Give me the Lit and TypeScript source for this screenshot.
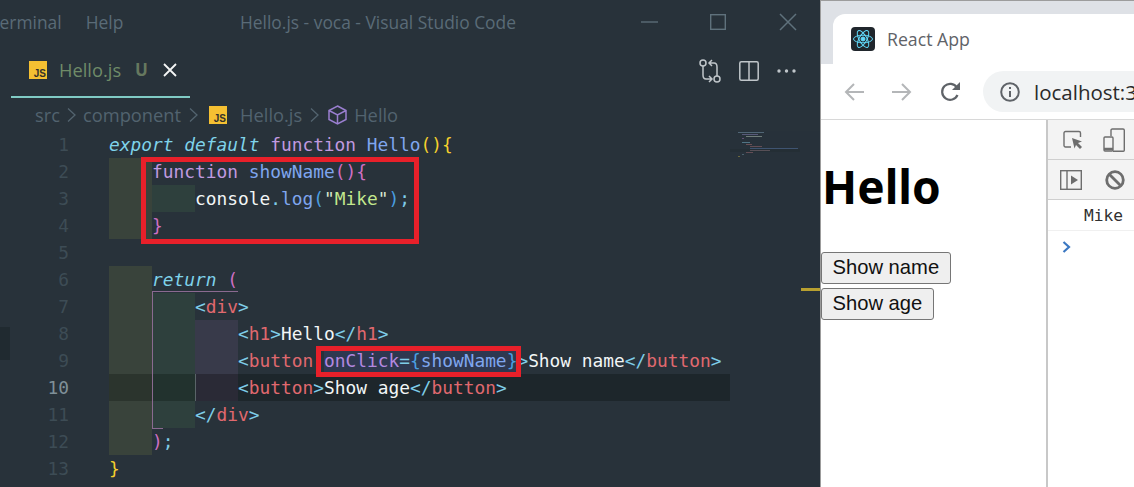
import { LitElement, html, css, svg } from "lit";
import { customElement } from "lit/decorators.js";

type Seg = [string, string?];
interface Line { n: number; ind: string[]; segs: Seg[]; cur?: boolean }

const lines: Line[] = [
  { n: 1, ind: [], segs: [["export default ", "kw"], ["function ", "fn"], ["Hello", "nm"], ["(){", "by"]] },
  { n: 2, ind: ["a"], segs: [["function ", "fn"], ["showName", "nm"], ["(){", "bp"]] },
  { n: 3, ind: ["a", "b"], segs: [["console", "tx"], [".", "pu"], ["log", "nm"], ["(", "bb"], ['"', "st2"], ["Mike", "st"], ['"', "st2"], [")", "bb"], [";", "pu"]] },
  { n: 4, ind: ["a"], segs: [["}", "bp"]] },
  { n: 5, ind: [], segs: [] },
  { n: 6, ind: ["a"], segs: [["return ", "kw"], ["(", "bp"]] },
  { n: 7, ind: ["a", "b"], segs: [["<", "pu"], ["div", "tg"], [">", "pu"]] },
  { n: 8, ind: ["a", "b", "c"], segs: [["<", "pu"], ["h1", "tg"], [">", "pu"], ["Hello", "tx"], ["</", "pu"], ["h1", "tg"], [">", "pu"]] },
  { n: 9, ind: ["a", "b", "c"], segs: [["<", "pu"], ["button", "tg"], [" "], ["onClick", "at"], ["=", "pu"], ["{", "bb"], ["showName", "nm"], ["}", "bb"], [">", "pu"], ["Show name", "tx"], ["</", "pu"], ["button", "tg"], [">", "pu"]] },
  { n: 10, cur: true, ind: ["a", "b", "c"], segs: [["<", "pu"], ["button", "tg"], [">", "pu"], ["Show age", "tx"], ["</", "pu"], ["button", "tg"], [">", "pu"]] },
  { n: 11, ind: ["a", "b"], segs: [["</", "pu"], ["div", "tg"], [">", "pu"]] },
  { n: 12, ind: ["a"], segs: [[")", "bp"], [";", "pu"]] },
  { n: 13, ind: [], segs: [["}", "by"]] },
];

const jsIcon = html`<span class="js"><span>JS</span></span>`;
const chevronPath = svg`<path d="M1 1.500 8 8l-7 6.500" fill="none" stroke="#53646f" stroke-width="1.300"/>`;

const miniRows: [number, number, number, string][] = [
  [738, 132, 26, "#7a9ab0"], [742, 134, 16, "#8a83b8"], [746, 136, 16, "#b8c8b8"], [742, 138, 2, "#a070b0"],
  [742, 142, 8, "#7ab8d0"], [746, 144, 6, "#b07070"], [750, 146, 12, "#a06a70"], [750, 148, 48, "#5878a8"], [750, 150, 20, "#8a7078"], [746, 152, 7, "#a06a70"], [742, 154, 2, "#7090a0"], [738, 156, 2, "#b0a040"],
];

@customElement("app-root")
export class AppRoot extends LitElement {
  static styles = css`
    :host { display: flex; width: 1134px; height: 487px; overflow: hidden; background: #28323a; }
    * { box-sizing: border-box; }
    svg { display: block; flex: none; }

    .vscode { position: relative; width: 820px; height: 487px; background: #28323a; font-family: "Open Sans", "Noto Sans", sans-serif; overflow: hidden; flex: none; }
    .titlebar { display: flex; align-items: center; height: 43px; font-size: 17.400px; color: #5a6b77; white-space: nowrap; }
    .menu { display: flex; gap: 24px; margin-left: -10px; width: 250px; }
    .title { width: 401px; }
    .winbtns { display: flex; align-items: center; }
    .min { margin-right: 52px; }
    .max { margin-right: 53px; }

    .tabs { display: flex; height: 55px; }
    .tab { margin-left: 11px; width: 179px; height: 55px; border-bottom: 2px solid #80cbc4; display: flex; align-items: center; padding: 0 0 0 18px; color: #6f8b68; font-size: 18.300px; }
    .tab .name { margin-left: 12px; }
    .tab .u { margin-left: 14px; font-weight: 700; color: #66785f; font-size: 17px; }
    .tab .x { margin-left: 15px; }
    .actions { margin-left: auto; display: flex; align-items: center; padding-right: 24px; gap: 18px; }

    .crumbs { display: flex; align-items: center; height: 33px; padding-left: 35px; color: #52636f; font-size: 18.300px; white-space: nowrap; }
    .crumbs .chev { margin: 0 7px; }
    .crumbs .chev.c2 { margin: 0 11px 0 8px; }
    .crumbs .chev.c3 { margin: 0 9px 0 8px; }
    .crumbs .fname { margin-left: 13px; }
    .crumbs .cube { margin-right: 7px; }

    .js { width: 18px; height: 18px; background: #f5c032; flex: none; display: flex; align-items: flex-end; justify-content: flex-end; padding: 0 1px 0 0; }
    .js span { font: 700 10px/11px "Liberation Sans", sans-serif; color: #33302a; }

    .editor { display: flex; height: 356px; }
    .code { width: 730px; font-family: "DejaVu Sans Mono", monospace; font-size: 17.850px; }
    .row { display: flex; height: 27px; line-height: 27px; white-space: pre; }
    .ln { width: 69px; margin-right: 40px; text-align: right; color: #3d4c55; flex: none; }
    .row.cur .ln { color: #7f9098; }
    .body { display: flex; flex: 1; }
    .row.cur .body { background: #1d262b; }
    .ind { width: 43px; flex: none; }
    .ind.a { background: #39433b; }
    .ind.b { background: #2e403d; }
    .ind.c { background: #383a4a; }
    .row.cur .ind.a { background: #2b342d; }
    .row.cur .ind.b { background: #22322e; }
    .row.cur .ind.c { background: #2a2a36; }

    .kw { color: #7fd3ea; font-style: italic; }
    .fn { color: #c19ae0; }
    .nm { color: #7fa6ef; }
    .by { color: #f5cf2d; }
    .bp { color: #cf6fc4; }
    .bb { color: #4a9fe0; }
    .tx { color: #f2f6f6; }
    .pu { color: #7fcde8; }
    .st { color: #c3e88d; }
    .st2 { color: #d8e8d0; }
    .tg { color: #e0696f; }
    .at { color: #b388e0; }
    .hl { background: #2e3850; }

    .guide { position: absolute; background: #8a6a90; }
    .guide.g1 { left: 152px; top: 292px; width: 1px; height: 136px; }
    .guide.g2 { left: 152px; top: 291px; width: 86px; height: 1px; }
    .guide.g3 { left: 152px; top: 428px; width: 11px; height: 1px; }
    .guide.g4 { left: 195px; top: 374px; width: 1px; height: 27px; background: #5a6468; }

    .redbox { position: absolute; border: 5px solid #e8202a; }
    .r1 { left: 141px; top: 157px; width: 278px; height: 87px; }
    .r2 { left: 316px; top: 346px; width: 205px; height: 31px; }

    .minimap { width: 90px; position: relative; background: #27313a; }
    .ruler { position: absolute; left: 801px; top: 288px; width: 19px; height: 3px; background: #b8a030; }
    .gutmark { position: absolute; left: 0; top: 327px; width: 10px; height: 33px; background: #202a30; }

    .browser { flex: 1; height: 487px; background: #fff; border-left: 1px solid #9c9c9c; border-top: 1px solid #9c9c9c; display: flex; flex-direction: column; }
    .strip { height: 63px; background: #dee1e6; display: flex; position: relative; flex: none; }
    .strip::before { content: ""; width: 12px; background: #dee1e6; border-bottom-left-radius: 10px; }
    .strip-inner { flex: 1; margin-top: 13px; background: #fff; border-radius: 12px 0 0 0; display: flex; align-items: flex-start; padding: 13px 0 0 18px; font: 17.700px "Open Sans", "Noto Sans", sans-serif; color: #5f6368; gap: 12px; }
    .fav { width: 24px; height: 24px; background: #20262c; border-radius: 4px; display: flex; align-items: center; justify-content: center; }
    .tabtitle { line-height: 24px; }
    .toolbar { height: 56px; background: #fff; display: flex; align-items: flex-start; padding: 7px 0 0 23px; flex: none; border-bottom: 1px solid #d8d8d8; }
    .nav { display: flex; align-items: center; height: 41px; gap: 28px; }
    .addr { margin-left: 22px; flex: 1; height: 41px; background: #f1f3f4; border-radius: 21px 0 0 21px; display: flex; align-items: center; padding-left: 17px; font: 20.500px "Open Sans", "Noto Sans", sans-serif; color: #2a2a2a; gap: 14px; white-space: nowrap; overflow: hidden; }
    .content { flex: 1; display: flex; min-height: 0; }
    .page { width: 227px; border-right: 2px solid #c8c8c8; flex: none; }
    .page h1 { margin: 37px 0 0 1px; font: 700 46px/58px "Noto Sans", sans-serif; color: #000; height: 95px; }
    .btn { display: block; font: 20.200px/24px "Liberation Sans", sans-serif; color: #111; background: #efefef; border: 1px solid #767676; border-radius: 3px; padding: 2px 10.500px 4px; height: 32px; margin-bottom: 4px; }
    .devtools { flex: 1; display: flex; flex-direction: column; overflow: hidden; }
    .dt { height: 40px; background: #f3f3f3; border-bottom: 1px solid #cfcfcf; display: flex; align-items: center; flex: none; padding-left: 15px; gap: 20px; }
    .dt.two { gap: 23px; padding-left: 12px; }
    .log { height: 31px; border-bottom: 1px solid #f0f0f0; font: 16.200px/32px "DejaVu Sans Mono", monospace; color: #303030; padding-left: 36px; flex: none; }
    .prompt { padding: 10px 0 0 14px; }
  `;

  private renderLine(l: Line) {
    return html`<div class="row ${l.cur ? "cur" : ""}"><span class="ln">${l.n}</span><span class="body">${l.ind.map((c) => html`<span class="ind ${c}"></span>`)}${this.renderSegs(l)}</span></div>`;
  }

  private renderSegs(l: Line) {
    const s = (x: Seg[]) => x.map(([t, c]) => html`<span class=${c ?? ""}>${t}</span>`);
    if (l.n === 9) {
      return html`<span>${s(l.segs.slice(0, 3))}</span><span class="hl">${s(l.segs.slice(3, 8))}</span><span>${s(l.segs.slice(8))}</span>`;
    }
    return html`<span>${s(l.segs)}</span>`;
  }

  render() {
    return html`
      <div class="vscode">
        <div class="titlebar">
          <div class="menu"><span>Terminal</span><span>Help</span></div>
          <div class="title">Hello.js - voca - Visual Studio Code</div>
          <div class="winbtns">
            <svg class="min" width="17" height="4" viewBox="0 0 17 4"><path d="M0 2h17" stroke="#5f717c" stroke-width="1.300"/></svg>
            <svg class="max" width="16" height="16" viewBox="0 0 16 16"><rect x=".7" y=".7" width="14.600" height="14.600" fill="none" stroke="#5f717c" stroke-width="1.400"/></svg>
            <svg width="18" height="18" viewBox="0 0 18 18"><path d="M1 1l16 16M17 1 1 17" stroke="#5f717c" stroke-width="1.500"/></svg>
          </div>
        </div>
        <div class="tabs">
          <div class="tab">
            ${jsIcon}<span class="name">Hello.js</span><span class="u">U</span>
            <svg class="x" width="14" height="14" viewBox="0 0 14 14"><path d="M1 1l12 12M13 1 1 13" stroke="#f4f6f6" stroke-width="1.800"/></svg>
          </div>
          <div class="actions">
            <svg width="22" height="24" viewBox="0 0 22 24" fill="none" stroke="#c0c6ca" stroke-width="1.500">
              <circle cx="4" cy="4" r="3"/><circle cx="18" cy="20" r="3"/>
              <path d="M4 7v9c0 2 1 4 3 4h6M10 17l3 3-3 3"/>
              <path d="M18 17V8c0-2-1-4-3-4H10M13 1 10 4l3 3"/>
            </svg>
            <svg width="20" height="20" viewBox="0 0 20 20" fill="none" stroke="#c0c6ca" stroke-width="1.500"><rect x=".8" y=".8" width="18.400" height="18.400" rx="1.500"/><path d="M10 1v18"/></svg>
            <svg width="19" height="4" viewBox="0 0 19 4" fill="#c0c6ca"><circle cx="2" cy="2" r="1.700"/><circle cx="9.500" cy="2" r="1.700"/><circle cx="17" cy="2" r="1.700"/></svg>
          </div>
        </div>
        <div class="crumbs">
          <span>src</span>
          <svg class="chev" width="9" height="16" viewBox="0 0 9 16">${chevronPath}</svg>
          <span>component</span>
          <svg class="chev c2" width="9" height="16" viewBox="0 0 9 16">${chevronPath}</svg>
          ${jsIcon}<span class="fname">Hello.js</span>
          <svg class="chev c3" width="9" height="16" viewBox="0 0 9 16">${chevronPath}</svg>
          <svg class="cube" width="19" height="20" viewBox="0 0 19 20" fill="none" stroke="#9a7fd0" stroke-width="1.500"><path d="M9.500 1 18 5.500v9L9.500 19 1 14.500v-9zM1 5.500l8.500 4.500L18 5.500M9.500 10v9"/></svg>
          <span>Hello</span>
        </div>
        <div class="editor">
          <div class="code">${lines.map((l) => this.renderLine(l))}</div>
          <div class="minimap">
            <svg width="90" height="60" viewBox="730 131 90 60">
              <rect x="730" y="149" width="70" height="3" fill="#242e35"/>
              ${miniRows.map(([x, y, w, c]) => svg`<rect x=${x} y=${y} width=${w} height="1" fill=${c} opacity=".5"/>`)}
            </svg>
          </div>
        </div>
        <div class="gutmark"></div>
        <div class="guide g1"></div><div class="guide g2"></div><div class="guide g3"></div><div class="guide g4"></div>
        <div class="redbox r1"></div><div class="redbox r2"></div>
        <div class="ruler"></div>
      </div>

      <div class="browser">
        <div class="strip">
          <div class="strip-inner">
            <div class="fav">
              <svg width="22" height="22" viewBox="-11 -11 22 22" fill="none" stroke="#61dafb" stroke-width="1">
                <circle r="2" fill="#61dafb"/>
                <ellipse rx="9.500" ry="3.800"/><ellipse rx="9.500" ry="3.800" transform="rotate(60)"/><ellipse rx="9.500" ry="3.800" transform="rotate(120)"/>
              </svg>
            </div>
            <span class="tabtitle">React App</span>
          </div>
        </div>
        <div class="toolbar">
          <div class="nav">
            <svg width="20" height="20" viewBox="0 0 20 20" fill="none" stroke="#b4b6b8" stroke-width="2"><path d="M20 10H2M10 2l-8 8 8 8"/></svg>
            <svg width="20" height="20" viewBox="0 0 20 20" fill="none" stroke="#b4b6b8" stroke-width="2"><path d="M0 10h18M10 2l8 8-8 8"/></svg>
            <svg width="21" height="21" viewBox="0 0 21 21" fill="none" stroke="#5f6368" stroke-width="2.200"><path d="M17.500 14a8 8 0 1 1-.6-7.500"/><path d="M20 1v8h-8z" fill="#5f6368" stroke="none"/></svg>
          </div>
          <div class="addr">
            <svg width="20" height="20" viewBox="0 0 20 20" fill="none" stroke="#5f6368" stroke-width="2"><circle cx="10" cy="10" r="8.800"/><path d="M10 9v6M10 5v2"/></svg>
            <span>localhost:3000</span>
          </div>
        </div>
        <div class="content">
          <div class="page">
            <h1>Hello</h1>
            <button class="btn">Show name</button>
            <button class="btn">Show age</button>
          </div>
          <div class="devtools">
            <div class="dt">
              <svg width="20" height="20" viewBox="0 0 20 20" fill="none" stroke="#6e6e6e" stroke-width="1.400"><path d="M8 17H2.500a1.500 1.500 0 0 1-1.500-1.500V3a1.500 1.500 0 0 1 1.500-1.500H16A1.500 1.500 0 0 1 17.500 3v4"/><path d="M9 8l10 3.500-4 1.500 4 4-2 2-4-4-1.500 3.500z" fill="#6e6e6e" stroke="none"/></svg>
              <svg width="22" height="24" viewBox="0 0 22 24" fill="none" stroke="#6e6e6e" stroke-width="1.400"><path d="M8 8V2a1.300 1.300 0 0 1 1.300-1H20a1.300 1.300 0 0 1 1.300 1.300v20a1 1 0 0 1-1 1H10"/><rect x="1" y="9" width="9" height="14" rx="1"/><path d="M1 21h9" stroke-width="2.500"/></svg>
            </div>
            <div class="dt two">
              <svg width="22" height="20" viewBox="0 0 22 20" fill="none" stroke="#6e6e6e" stroke-width="1.400"><rect x=".7" y=".7" width="20.600" height="18.600"/><path d="M7 1v18"/><path d="M11 5.500l7 4.500-7 4.500z" fill="#6e6e6e" stroke="none"/></svg>
              <svg width="20" height="20" viewBox="0 0 20 20" fill="none" stroke="#6e6e6e" stroke-width="2.800"><circle cx="10" cy="10" r="8.300"/><path d="M4 4l12 12"/></svg>
            </div>
            <div class="log">Mike</div>
            <div class="prompt"><svg width="9" height="12" viewBox="0 0 9 12"><path d="M1.500 1 7 6l-5.500 5" fill="none" stroke="#3b78c2" stroke-width="2.200"/></svg></div>
          </div>
        </div>
      </div>
    `;
  }
}
